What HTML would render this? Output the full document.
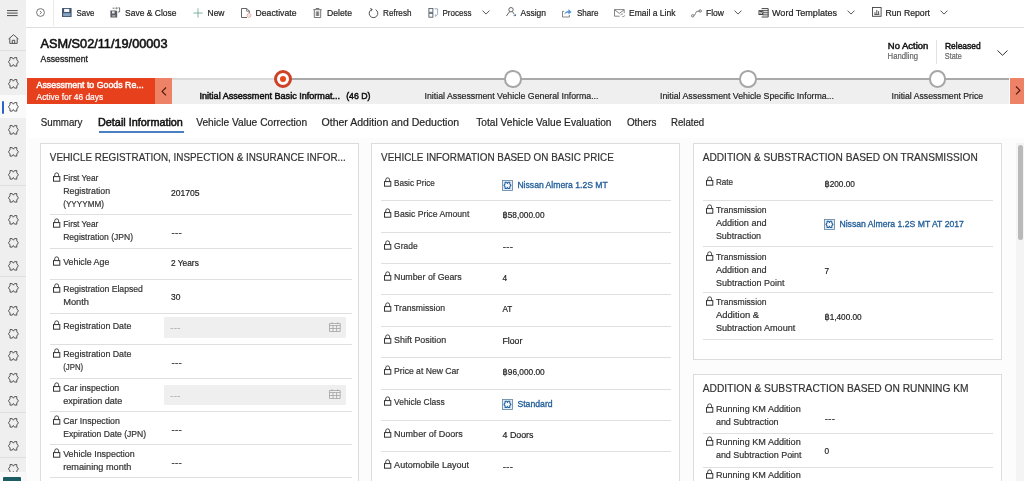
<!DOCTYPE html>
<html lang="en">
<head>
<meta charset="utf-8">
<title>Assessment</title>
<style>
*{box-sizing:border-box;margin:0;padding:0}
html,body{width:1024px;height:481px;overflow:hidden;background:#fff}
body{font-family:"Liberation Sans","DejaVu Sans",sans-serif;color:#222;position:relative;font-size:9px}
.a,.t{position:absolute}
.t{white-space:nowrap;transform-origin:0 0;color:#262626}
#side{left:0;top:0;width:26.4px;height:481px;background:#efefef}
#sel{left:0;top:95px;width:26.4px;height:23px;background:#fafafa}
#selbar{left:1.5px;top:100.5px;width:2.2px;height:13px;background:#2b63c7;border-radius:1px}
.sd{position:absolute;left:0;width:26.4px;height:1px;background:#dedede}
.pz{position:absolute;left:7.5px;width:11px;height:10px}
#topbar{left:26.4px;top:0;width:998px;height:27.6px;background:#fff;border-bottom:1.7px solid #dedede}
#bpf{left:27px;top:79px;width:981.7px;height:24.7px;background:#efefef}
#bpfline1{left:172px;top:78px;width:112px;height:1.7px;background:#dadada}
#bpfline2{left:284px;top:78px;width:724.7px;height:1.7px;background:#a9a9a9}
#bpfred{left:27px;top:78px;width:128.2px;height:25.7px;background:#e6401d}
#bpfred2{left:155.2px;top:78px;width:17px;height:25.7px;background:#ee8267}
#bpfnext{left:1010px;top:78px;width:14px;height:25.7px;background:#ee8267}
.circ{position:absolute;top:70.4px;width:17.6px;height:17.6px;border-radius:50%;border:2.7px solid #a6a6a6;background:#fff}
#content{left:27px;top:138px;width:997px;height:343px;background:#fcfcfc}
.card{position:absolute;background:#fff;border:1px solid #dcdcdc}
.sep{position:absolute;height:1px;background:#dfdfdf}
.dt{position:absolute;background:#efefef;height:21px;border-radius:1px}
</style>
</head>
<body>
<div id="bg" style="position:absolute;left:0;top:0;width:1024px;height:481px">

<div id="side" class="a"></div>
<div id="sel" class="a"></div><div id="selbar" class="a"></div>
<div class="sd" style="top:50px"></div>
<div class="sd" style="top:185px"></div>
<div class="sd" style="top:276px"></div>
<div class="sd" style="top:411.5px"></div>
<div class="sd" style="top:457px"></div>
<svg class="a" style="left:7.4px;top:10.3px" width="11" height="7" viewBox="0 0 11 7"><path d="M0 0.6H10.7M0 3.1H10.7M0 5.6H10.7" stroke="#4a4a4a" stroke-width="1" fill="none"/></svg>
<svg class="a" style="left:7.5px;top:33.5px" width="11" height="10" viewBox="0 0 11 10"><path d="M0.6 5 L5.5 0.7 L10.4 5 M1.8 4.2 V9.4 H9.2 V4.2 M4.3 9.4 V6.3 H6.7 V9.4" stroke="#444" stroke-width="0.9" fill="none" stroke-linejoin="round"/></svg>
<svg class="pz" style="top:56.5px" viewBox="0 0 11 10"><path d="M2 0.6 H4.3 L5.4 2.2 L6.5 0.6 H8.8 V2.8 L10.4 4.85 L8.8 6.9 V9.1 H6.5 L5.4 7.5 L4.3 9.1 H2 V6.9 L0.4 4.85 L2 2.8 Z" stroke="#444" stroke-width="0.9" fill="none" stroke-linejoin="round"/></svg>
<svg class="pz" style="top:79.0px" viewBox="0 0 11 10"><path d="M2 0.6 H4.3 L5.4 2.2 L6.5 0.6 H8.8 V2.8 L10.4 4.85 L8.8 6.9 V9.1 H6.5 L5.4 7.5 L4.3 9.1 H2 V6.9 L0.4 4.85 L2 2.8 Z" stroke="#444" stroke-width="0.9" fill="none" stroke-linejoin="round"/></svg>
<svg class="pz" style="top:102.0px" viewBox="0 0 11 10"><path d="M2 0.6 H4.3 L5.4 2.2 L6.5 0.6 H8.8 V2.8 L10.4 4.85 L8.8 6.9 V9.1 H6.5 L5.4 7.5 L4.3 9.1 H2 V6.9 L0.4 4.85 L2 2.8 Z" stroke="#444" stroke-width="0.9" fill="none" stroke-linejoin="round"/></svg>
<svg class="pz" style="top:124.5px" viewBox="0 0 11 10"><path d="M2 0.6 H4.3 L5.4 2.2 L6.5 0.6 H8.8 V2.8 L10.4 4.85 L8.8 6.9 V9.1 H6.5 L5.4 7.5 L4.3 9.1 H2 V6.9 L0.4 4.85 L2 2.8 Z" stroke="#444" stroke-width="0.9" fill="none" stroke-linejoin="round"/></svg>
<svg class="pz" style="top:147.0px" viewBox="0 0 11 10"><path d="M2 0.6 H4.3 L5.4 2.2 L6.5 0.6 H8.8 V2.8 L10.4 4.85 L8.8 6.9 V9.1 H6.5 L5.4 7.5 L4.3 9.1 H2 V6.9 L0.4 4.85 L2 2.8 Z" stroke="#444" stroke-width="0.9" fill="none" stroke-linejoin="round"/></svg>
<svg class="pz" style="top:169.5px" viewBox="0 0 11 10"><path d="M2 0.6 H4.3 L5.4 2.2 L6.5 0.6 H8.8 V2.8 L10.4 4.85 L8.8 6.9 V9.1 H6.5 L5.4 7.5 L4.3 9.1 H2 V6.9 L0.4 4.85 L2 2.8 Z" stroke="#444" stroke-width="0.9" fill="none" stroke-linejoin="round"/></svg>
<svg class="pz" style="top:192.5px" viewBox="0 0 11 10"><path d="M2 0.6 H4.3 L5.4 2.2 L6.5 0.6 H8.8 V2.8 L10.4 4.85 L8.8 6.9 V9.1 H6.5 L5.4 7.5 L4.3 9.1 H2 V6.9 L0.4 4.85 L2 2.8 Z" stroke="#444" stroke-width="0.9" fill="none" stroke-linejoin="round"/></svg>
<svg class="pz" style="top:215.0px" viewBox="0 0 11 10"><path d="M2 0.6 H4.3 L5.4 2.2 L6.5 0.6 H8.8 V2.8 L10.4 4.85 L8.8 6.9 V9.1 H6.5 L5.4 7.5 L4.3 9.1 H2 V6.9 L0.4 4.85 L2 2.8 Z" stroke="#444" stroke-width="0.9" fill="none" stroke-linejoin="round"/></svg>
<svg class="pz" style="top:238.0px" viewBox="0 0 11 10"><path d="M2 0.6 H4.3 L5.4 2.2 L6.5 0.6 H8.8 V2.8 L10.4 4.85 L8.8 6.9 V9.1 H6.5 L5.4 7.5 L4.3 9.1 H2 V6.9 L0.4 4.85 L2 2.8 Z" stroke="#444" stroke-width="0.9" fill="none" stroke-linejoin="round"/></svg>
<svg class="pz" style="top:260.5px" viewBox="0 0 11 10"><path d="M2 0.6 H4.3 L5.4 2.2 L6.5 0.6 H8.8 V2.8 L10.4 4.85 L8.8 6.9 V9.1 H6.5 L5.4 7.5 L4.3 9.1 H2 V6.9 L0.4 4.85 L2 2.8 Z" stroke="#444" stroke-width="0.9" fill="none" stroke-linejoin="round"/></svg>
<svg class="pz" style="top:283.0px" viewBox="0 0 11 10"><path d="M2 0.6 H4.3 L5.4 2.2 L6.5 0.6 H8.8 V2.8 L10.4 4.85 L8.8 6.9 V9.1 H6.5 L5.4 7.5 L4.3 9.1 H2 V6.9 L0.4 4.85 L2 2.8 Z" stroke="#444" stroke-width="0.9" fill="none" stroke-linejoin="round"/></svg>
<svg class="pz" style="top:305.5px" viewBox="0 0 11 10"><path d="M2 0.6 H4.3 L5.4 2.2 L6.5 0.6 H8.8 V2.8 L10.4 4.85 L8.8 6.9 V9.1 H6.5 L5.4 7.5 L4.3 9.1 H2 V6.9 L0.4 4.85 L2 2.8 Z" stroke="#444" stroke-width="0.9" fill="none" stroke-linejoin="round"/></svg>
<svg class="pz" style="top:328.5px" viewBox="0 0 11 10"><path d="M2 0.6 H4.3 L5.4 2.2 L6.5 0.6 H8.8 V2.8 L10.4 4.85 L8.8 6.9 V9.1 H6.5 L5.4 7.5 L4.3 9.1 H2 V6.9 L0.4 4.85 L2 2.8 Z" stroke="#444" stroke-width="0.9" fill="none" stroke-linejoin="round"/></svg>
<svg class="pz" style="top:351.0px" viewBox="0 0 11 10"><path d="M2 0.6 H4.3 L5.4 2.2 L6.5 0.6 H8.8 V2.8 L10.4 4.85 L8.8 6.9 V9.1 H6.5 L5.4 7.5 L4.3 9.1 H2 V6.9 L0.4 4.85 L2 2.8 Z" stroke="#444" stroke-width="0.9" fill="none" stroke-linejoin="round"/></svg>
<svg class="pz" style="top:373.0px" viewBox="0 0 11 10"><path d="M2 0.6 H4.3 L5.4 2.2 L6.5 0.6 H8.8 V2.8 L10.4 4.85 L8.8 6.9 V9.1 H6.5 L5.4 7.5 L4.3 9.1 H2 V6.9 L0.4 4.85 L2 2.8 Z" stroke="#444" stroke-width="0.9" fill="none" stroke-linejoin="round"/></svg>
<svg class="pz" style="top:395.6px" viewBox="0 0 11 10"><path d="M2 0.6 H4.3 L5.4 2.2 L6.5 0.6 H8.8 V2.8 L10.4 4.85 L8.8 6.9 V9.1 H6.5 L5.4 7.5 L4.3 9.1 H2 V6.9 L0.4 4.85 L2 2.8 Z" stroke="#444" stroke-width="0.9" fill="none" stroke-linejoin="round"/></svg>
<svg class="pz" style="top:418.2px" viewBox="0 0 11 10"><path d="M2 0.6 H4.3 L5.4 2.2 L6.5 0.6 H8.8 V2.8 L10.4 4.85 L8.8 6.9 V9.1 H6.5 L5.4 7.5 L4.3 9.1 H2 V6.9 L0.4 4.85 L2 2.8 Z" stroke="#444" stroke-width="0.9" fill="none" stroke-linejoin="round"/></svg>
<svg class="pz" style="top:441.0px" viewBox="0 0 11 10"><path d="M2 0.6 H4.3 L5.4 2.2 L6.5 0.6 H8.8 V2.8 L10.4 4.85 L8.8 6.9 V9.1 H6.5 L5.4 7.5 L4.3 9.1 H2 V6.9 L0.4 4.85 L2 2.8 Z" stroke="#444" stroke-width="0.9" fill="none" stroke-linejoin="round"/></svg>
<svg class="pz" style="top:464.2px" viewBox="0 0 11 10"><path d="M2 0.6 H4.3 L5.4 2.2 L6.5 0.6 H8.8 V2.8 L10.4 4.85 L8.8 6.9 V9.1 H6.5 L5.4 7.5 L4.3 9.1 H2 V6.9 L0.4 4.85 L2 2.8 Z" stroke="#444" stroke-width="0.9" fill="none" stroke-linejoin="round"/></svg>
<div class="a" style="left:0;top:472.2px;width:27px;height:9px;background:#f8f8f8"></div>
<div class="a" style="left:3.3px;top:477.2px;width:17.6px;height:4px;background:#1b5c63;border-radius:1px 1px 0 0"></div>
<div id="topbar" class="a"></div>
<div class="a" style="left:52.6px;top:0;width:1px;height:26px;background:#eaeaea"></div>
<svg class="a" style="left:36px;top:8px" width="9" height="9" viewBox="0 0 9 9"><circle cx="4.5" cy="4.5" r="3.9" stroke="#555" stroke-width="0.8" fill="none"/><path d="M3.9 2.9 L5.5 4.5 L3.9 6.1" stroke="#555" stroke-width="0.8" fill="none"/></svg>
<svg class="a" style="left:62.3px;top:7.9px" width="10" height="9.2" viewBox="0 0 10 9.2"><rect x="0" y="0" width="9.6" height="9" rx="0.6" fill="#43556d"/><rect x="2.1" y="0.9" width="5.2" height="3.1" fill="#f4f6f9"/><rect x="1.2" y="5" width="7.2" height="3.2" fill="#6d8db3"/><path d="M1.2 6.1 H8.4 M1.2 7.3 H8.4" stroke="#b9c9dc" stroke-width="0.5"/></svg>
<svg class="a" style="left:110px;top:7.3px" width="11" height="11" viewBox="0 0 11 11"><path d="M0.4 3.6 H6.2 L7.2 4.6 V10.4 H0.4 Z" fill="#585d63"/><rect x="2" y="4.3" width="2.6" height="2.2" fill="#e9e9e9"/><rect x="2.2" y="8.3" width="3.2" height="1.2" fill="#c8c8c8"/><path d="M2.6 1.2 H4.6 M5.4 1.2 H7 M8.4 0.8 H9.6 V5 H8" stroke="#666" stroke-width="0.9" fill="none"/><path d="M6.4 0.3 L7.6 1.2 L6.4 2.1" stroke="#666" stroke-width="0.7" fill="none"/></svg>
<svg class="a" style="left:192.5px;top:8px" width="10" height="10" viewBox="0 0 10 10"><path d="M5 0.3 V9.7 M0.3 5 H9.7" stroke="#4f9a7d" stroke-width="0.7" fill="none"/></svg>
<svg class="a" style="left:241px;top:8px" width="11" height="10" viewBox="0 0 11 10"><path d="M6 9.5 H0.5 V0.5 H5.8 L8.3 3 V5" stroke="#555" stroke-width="0.9" fill="none"/><path d="M5.6 0.7 V3.2 H8.1" stroke="#555" stroke-width="0.7" fill="none"/><circle cx="8" cy="7.4" r="1.9" stroke="#d98a80" stroke-width="0.7" fill="#fff"/><path d="M7.1 6.5 L8.9 8.3" stroke="#d98a80" stroke-width="0.6"/></svg>
<svg class="a" style="left:313px;top:8px" width="9" height="10" viewBox="0 0 9 10"><path d="M0.3 1.7 H8.7 M3 1.5 V0.5 H6 V1.5 M1.3 1.8 V9.5 H7.7 V1.8 M3.3 3.4 V8 M4.5 3.4 V8 M5.7 3.4 V8" stroke="#555" stroke-width="0.8" fill="none"/></svg>
<svg class="a" style="left:368px;top:7.5px" width="11" height="11" viewBox="0 0 11 11"><path d="M4 1.3 A4.3 4.3 0 1 0 7.6 1.6" stroke="#444" stroke-width="0.9" fill="none"/><path d="M2.2 0.4 L4.2 1.3 L3.2 3.2" stroke="#444" stroke-width="0.8" fill="none"/></svg>
<svg class="a" style="left:428px;top:8px" width="11" height="10" viewBox="0 0 11 10"><rect x="0.9" y="0.4" width="4" height="3.9" stroke="#505a66" stroke-width="0.9" fill="none"/><rect x="0.9" y="5.3" width="4" height="3.9" stroke="#505a66" stroke-width="0.9" fill="none"/><path d="M6.6 0.8 H9.6 V5.6 C9.6 7 8.8 7.6 7.4 7.6 M8.2 6.4 L6.9 7.6 L8.2 8.8" stroke="#7f97b0" stroke-width="0.8" fill="none"/></svg>
<svg class="a" style="left:482px;top:9.9px" width="8" height="5" viewBox="0 0 8 5"><path d="M0.5 0.6 L4 4.1 L7.5 0.6" stroke="#555" stroke-width="1" fill="none"/></svg>
<svg class="a" style="left:505.7px;top:7.3px" width="11" height="10" viewBox="0 0 11 10"><circle cx="5" cy="2.7" r="2.2" stroke="#4a4a4a" stroke-width="0.85" fill="none"/><path d="M0.4 9 L3.6 4.6 M6.4 4.6 L8 6.9" stroke="#4a4a4a" stroke-width="0.85" fill="none"/><path d="M7.6 8.2 H9.6 M8.8 7.3 L9.9 8.2 L8.8 9.1" stroke="#2d4a75" stroke-width="0.8" fill="none"/></svg>
<svg class="a" style="left:562px;top:7.5px" width="11" height="10" viewBox="0 0 11 10"><path d="M2.2 3.4 H0.5 V9 H7.4 V7" stroke="#666" stroke-width="0.8" fill="none"/><path d="M2.3 6.8 C2.7 4.2 4.4 3 6.4 3 V1 L9.6 3.9 L6.4 6.6 V4.8 C4.7 4.8 3.4 5.3 2.3 6.8 Z" fill="#5796d6"/></svg>
<svg class="a" style="left:613.9px;top:8.7px" width="11" height="9" viewBox="0 0 11 9"><path d="M5.6 7.2 H0.5 V0.6 H10.2 V4.2 M0.6 0.8 L5.3 4.4 L10.1 0.8" stroke="#666" stroke-width="0.8" fill="none"/><path d="M6.8 6.2 C6.8 5.3 7.4 5 8 5 H9 M8.2 7.6 H9.3 C10 7.6 10.5 7.2 10.5 6.3" stroke="#666" stroke-width="0.7" fill="none"/></svg>
<svg class="a" style="left:691px;top:8.5px" width="11" height="9" viewBox="0 0 11 9"><circle cx="1.7" cy="6.8" r="1.2" stroke="#555" stroke-width="0.8" fill="none"/><circle cx="9.2" cy="2" r="1.2" stroke="#555" stroke-width="0.8" fill="none"/><path d="M2.8 6.6 C4.6 6.4 4.2 2.8 6 2.4 C6.6 2.2 7.2 2.2 8 2.1" stroke="#555" stroke-width="0.8" fill="none"/></svg>
<svg class="a" style="left:733.5px;top:9.9px" width="8" height="5" viewBox="0 0 8 5"><path d="M0.5 0.6 L4 4.1 L7.5 0.6" stroke="#555" stroke-width="1" fill="none"/></svg>
<svg class="a" style="left:757.5px;top:7.6px" width="11" height="10" viewBox="0 0 11 10"><path d="M3.6 0.6 H10.2 V9 H3.6 M4.5 2.7 H10.2 M4.5 4.8 H10.2 M4.5 6.9 H10.2" stroke="#333" stroke-width="0.9" fill="none"/><rect x="0.5" y="2.2" width="4.8" height="4.8" fill="#3a3a3a"/><path d="M1.2 3.4 L2 6 L2.8 3.9 L3.6 6 L4.4 3.4" stroke="#fff" stroke-width="0.6" fill="none"/></svg>
<svg class="a" style="left:846.5px;top:9.9px" width="8" height="5" viewBox="0 0 8 5"><path d="M0.5 0.6 L4 4.1 L7.5 0.6" stroke="#555" stroke-width="1" fill="none"/></svg>
<svg class="a" style="left:871.5px;top:7.2px" width="10" height="11" viewBox="0 0 10 11"><rect x="0.5" y="0.5" width="8.6" height="8.8" stroke="#444" stroke-width="0.9" fill="none"/><path d="M3 7.4 V5.2 M4.8 7.4 V3 M6.6 7.4 V4.2 M2.3 7.6 H7.4" stroke="#444" stroke-width="0.9" fill="none"/></svg>
<svg class="a" style="left:940px;top:9.9px" width="8" height="5" viewBox="0 0 8 5"><path d="M0.5 0.6 L4 4.1 L7.5 0.6" stroke="#555" stroke-width="1" fill="none"/></svg>
<div class="a" style="left:936px;top:40px;width:1px;height:24px;background:#e2e2e2"></div>
<svg class="a" style="left:997px;top:49.5px" width="11" height="6" viewBox="0 0 11 6"><path d="M0.5 0.5 L5.5 5.3 L10.5 0.5" stroke="#333" stroke-width="1" fill="none"/></svg>
<div id="bpf" class="a"></div>
<div id="bpfline1" class="a"></div><div id="bpfline2" class="a"></div>
<div id="bpfred" class="a"></div><div id="bpfred2" class="a"></div><div id="bpfnext" class="a"></div>
<svg class="a" style="left:160.6px;top:86.8px" width="6" height="9" viewBox="0 0 6 9"><path d="M5 0.5 L1.1 4.4 L5 8.3" stroke="#4a170c" stroke-width="1.1" fill="none"/></svg>
<svg class="a" style="left:1015px;top:86.2px" width="6" height="9" viewBox="0 0 6 9"><path d="M1 0.5 L4.9 4.4 L1 8.3" stroke="#4a170c" stroke-width="1.1" fill="none"/></svg>
<div class="a" style="left:274.4px;top:70.3px;width:18px;height:18px;border-radius:50%;border:3.4px solid #cd4127;background:#fff"></div>
<div class="a" style="left:280.4px;top:76.3px;width:6px;height:6px;border-radius:50%;background:#e8461c"></div>
<div class="circ" style="left:504.2px"></div>
<div class="circ" style="left:739.2px"></div>
<div class="circ" style="left:928.7px"></div>
<div class="a" style="left:98.5px;top:130.6px;width:85.2px;height:2.3px;background:#4a80c2"></div>
<div id="content" class="a"></div>
<div class="a" style="left:1015.8px;top:143.4px;width:8.2px;height:338px;background:#f4f4f4"></div>
<div class="a" style="left:1018px;top:145px;width:5.2px;height:95px;background:#b9b9b9;border-radius:2.5px"></div>
<div class="card" style="left:39.7px;top:142.8px;width:319px;height:345px"></div>
<div class="sep" style="left:50px;top:214.4px;width:301.5px"></div>
<div class="sep" style="left:50px;top:247.8px;width:301.5px"></div>
<div class="sep" style="left:50px;top:279.1px;width:301.5px"></div>
<div class="sep" style="left:50px;top:312.8px;width:301.5px"></div>
<div class="sep" style="left:50px;top:344.4px;width:301.5px"></div>
<div class="sep" style="left:50px;top:377.7px;width:301.5px"></div>
<div class="sep" style="left:50px;top:410.6px;width:301.5px"></div>
<div class="sep" style="left:50px;top:444.0px;width:301.5px"></div>
<div class="sep" style="left:50px;top:477.3px;width:301.5px"></div>
<svg class="a" style="left:53px;top:172.1px" width="8" height="10" viewBox="0 0 8 10"><rect x="0.5" y="4.6" width="6.3" height="4.6" stroke="#333" stroke-width="1" fill="none"/><path d="M1.7 4.6 V2.8 A1.95 1.95 0 0 1 5.6 2.8 V4.6" stroke="#333" stroke-width="0.9" fill="none"/></svg>
<svg class="a" style="left:53px;top:218.4px" width="8" height="10" viewBox="0 0 8 10"><rect x="0.5" y="4.6" width="6.3" height="4.6" stroke="#333" stroke-width="1" fill="none"/><path d="M1.7 4.6 V2.8 A1.95 1.95 0 0 1 5.6 2.8 V4.6" stroke="#333" stroke-width="0.9" fill="none"/></svg>
<svg class="a" style="left:53px;top:255.6px" width="8" height="10" viewBox="0 0 8 10"><rect x="0.5" y="4.6" width="6.3" height="4.6" stroke="#333" stroke-width="1" fill="none"/><path d="M1.7 4.6 V2.8 A1.95 1.95 0 0 1 5.6 2.8 V4.6" stroke="#333" stroke-width="0.9" fill="none"/></svg>
<svg class="a" style="left:53px;top:282.9px" width="8" height="10" viewBox="0 0 8 10"><rect x="0.5" y="4.6" width="6.3" height="4.6" stroke="#333" stroke-width="1" fill="none"/><path d="M1.7 4.6 V2.8 A1.95 1.95 0 0 1 5.6 2.8 V4.6" stroke="#333" stroke-width="0.9" fill="none"/></svg>
<svg class="a" style="left:53px;top:319.6px" width="8" height="10" viewBox="0 0 8 10"><rect x="0.5" y="4.6" width="6.3" height="4.6" stroke="#333" stroke-width="1" fill="none"/><path d="M1.7 4.6 V2.8 A1.95 1.95 0 0 1 5.6 2.8 V4.6" stroke="#333" stroke-width="0.9" fill="none"/></svg>
<div class="dt" style="left:163.8px;top:316.8px;width:181.8px;height:20.8px"></div>
<svg class="a" style="left:328.5px;top:321.6px" width="12" height="10" viewBox="0 0 12 10"><path d="M0.5 1.5 H11.2 V9.5 H0.5 Z M0.5 3.5 H11.2 M3 0.3 V2 M8.7 0.3 V2 M4 3.5 V9.5 M7.6 3.5 V9.5 M0.5 6.5 H11.2" stroke="#999" stroke-width="0.7" fill="none"/></svg>
<svg class="a" style="left:53px;top:348.4px" width="8" height="10" viewBox="0 0 8 10"><rect x="0.5" y="4.6" width="6.3" height="4.6" stroke="#333" stroke-width="1" fill="none"/><path d="M1.7 4.6 V2.8 A1.95 1.95 0 0 1 5.6 2.8 V4.6" stroke="#333" stroke-width="0.9" fill="none"/></svg>
<svg class="a" style="left:53px;top:381.9px" width="8" height="10" viewBox="0 0 8 10"><rect x="0.5" y="4.6" width="6.3" height="4.6" stroke="#333" stroke-width="1" fill="none"/><path d="M1.7 4.6 V2.8 A1.95 1.95 0 0 1 5.6 2.8 V4.6" stroke="#333" stroke-width="0.9" fill="none"/></svg>
<div class="dt" style="left:163.8px;top:384.5px;width:181.8px;height:20.8px"></div>
<svg class="a" style="left:328.5px;top:389.3px" width="12" height="10" viewBox="0 0 12 10"><path d="M0.5 1.5 H11.2 V9.5 H0.5 Z M0.5 3.5 H11.2 M3 0.3 V2 M8.7 0.3 V2 M4 3.5 V9.5 M7.6 3.5 V9.5 M0.5 6.5 H11.2" stroke="#999" stroke-width="0.7" fill="none"/></svg>
<svg class="a" style="left:53px;top:415.4px" width="8" height="10" viewBox="0 0 8 10"><rect x="0.5" y="4.6" width="6.3" height="4.6" stroke="#333" stroke-width="1" fill="none"/><path d="M1.7 4.6 V2.8 A1.95 1.95 0 0 1 5.6 2.8 V4.6" stroke="#333" stroke-width="0.9" fill="none"/></svg>
<svg class="a" style="left:53px;top:448.2px" width="8" height="10" viewBox="0 0 8 10"><rect x="0.5" y="4.6" width="6.3" height="4.6" stroke="#333" stroke-width="1" fill="none"/><path d="M1.7 4.6 V2.8 A1.95 1.95 0 0 1 5.6 2.8 V4.6" stroke="#333" stroke-width="0.9" fill="none"/></svg>
<div class="card" style="left:371.1px;top:142.8px;width:309.4px;height:345px"></div>
<div class="sep" style="left:381px;top:199.9px;width:290px"></div>
<div class="sep" style="left:381px;top:231.8px;width:290px"></div>
<div class="sep" style="left:381px;top:262.8px;width:290px"></div>
<div class="sep" style="left:381px;top:294.3px;width:290px"></div>
<div class="sep" style="left:381px;top:325.8px;width:290px"></div>
<div class="sep" style="left:381px;top:356.9px;width:290px"></div>
<div class="sep" style="left:381px;top:388.5px;width:290px"></div>
<div class="sep" style="left:381px;top:419.9px;width:290px"></div>
<div class="sep" style="left:381px;top:451.4px;width:290px"></div>
<svg class="a" style="left:384px;top:177.0px" width="8" height="10" viewBox="0 0 8 10"><rect x="0.5" y="4.6" width="6.3" height="4.6" stroke="#333" stroke-width="1" fill="none"/><path d="M1.7 4.6 V2.8 A1.95 1.95 0 0 1 5.6 2.8 V4.6" stroke="#333" stroke-width="0.9" fill="none"/></svg>
<svg class="a" style="left:502.0px;top:179.5px" width="11.5" height="11.5" viewBox="0 0 11.5 11.5"><rect x="0.45" y="0.45" width="10.1" height="10.1" stroke="#5d7f9f" stroke-width="0.8" fill="#e4eef8"/><g transform="translate(1.7,1.8) scale(0.69,0.74)"><path d="M2 0.6 H4.3 L5.4 2.2 L6.5 0.6 H8.8 V2.8 L10.4 4.85 L8.8 6.9 V9.1 H6.5 L5.4 7.5 L4.3 9.1 H2 V6.9 L0.4 4.85 L2 2.8 Z" stroke="#255f9c" stroke-width="1.5" fill="#f3f8fd" stroke-linejoin="round"/></g></svg>
<svg class="a" style="left:384px;top:207.8px" width="8" height="10" viewBox="0 0 8 10"><rect x="0.5" y="4.6" width="6.3" height="4.6" stroke="#333" stroke-width="1" fill="none"/><path d="M1.7 4.6 V2.8 A1.95 1.95 0 0 1 5.6 2.8 V4.6" stroke="#333" stroke-width="0.9" fill="none"/></svg>
<svg class="a" style="left:384px;top:239.7px" width="8" height="10" viewBox="0 0 8 10"><rect x="0.5" y="4.6" width="6.3" height="4.6" stroke="#333" stroke-width="1" fill="none"/><path d="M1.7 4.6 V2.8 A1.95 1.95 0 0 1 5.6 2.8 V4.6" stroke="#333" stroke-width="0.9" fill="none"/></svg>
<svg class="a" style="left:384px;top:270.7px" width="8" height="10" viewBox="0 0 8 10"><rect x="0.5" y="4.6" width="6.3" height="4.6" stroke="#333" stroke-width="1" fill="none"/><path d="M1.7 4.6 V2.8 A1.95 1.95 0 0 1 5.6 2.8 V4.6" stroke="#333" stroke-width="0.9" fill="none"/></svg>
<svg class="a" style="left:384px;top:302.2px" width="8" height="10" viewBox="0 0 8 10"><rect x="0.5" y="4.6" width="6.3" height="4.6" stroke="#333" stroke-width="1" fill="none"/><path d="M1.7 4.6 V2.8 A1.95 1.95 0 0 1 5.6 2.8 V4.6" stroke="#333" stroke-width="0.9" fill="none"/></svg>
<svg class="a" style="left:384px;top:333.7px" width="8" height="10" viewBox="0 0 8 10"><rect x="0.5" y="4.6" width="6.3" height="4.6" stroke="#333" stroke-width="1" fill="none"/><path d="M1.7 4.6 V2.8 A1.95 1.95 0 0 1 5.6 2.8 V4.6" stroke="#333" stroke-width="0.9" fill="none"/></svg>
<svg class="a" style="left:384px;top:364.8px" width="8" height="10" viewBox="0 0 8 10"><rect x="0.5" y="4.6" width="6.3" height="4.6" stroke="#333" stroke-width="1" fill="none"/><path d="M1.7 4.6 V2.8 A1.95 1.95 0 0 1 5.6 2.8 V4.6" stroke="#333" stroke-width="0.9" fill="none"/></svg>
<svg class="a" style="left:384px;top:396.4px" width="8" height="10" viewBox="0 0 8 10"><rect x="0.5" y="4.6" width="6.3" height="4.6" stroke="#333" stroke-width="1" fill="none"/><path d="M1.7 4.6 V2.8 A1.95 1.95 0 0 1 5.6 2.8 V4.6" stroke="#333" stroke-width="0.9" fill="none"/></svg>
<svg class="a" style="left:502.0px;top:398.9px" width="11.5" height="11.5" viewBox="0 0 11.5 11.5"><rect x="0.45" y="0.45" width="10.1" height="10.1" stroke="#5d7f9f" stroke-width="0.8" fill="#e4eef8"/><g transform="translate(1.7,1.8) scale(0.69,0.74)"><path d="M2 0.6 H4.3 L5.4 2.2 L6.5 0.6 H8.8 V2.8 L10.4 4.85 L8.8 6.9 V9.1 H6.5 L5.4 7.5 L4.3 9.1 H2 V6.9 L0.4 4.85 L2 2.8 Z" stroke="#255f9c" stroke-width="1.5" fill="#f3f8fd" stroke-linejoin="round"/></g></svg>
<svg class="a" style="left:384px;top:427.8px" width="8" height="10" viewBox="0 0 8 10"><rect x="0.5" y="4.6" width="6.3" height="4.6" stroke="#333" stroke-width="1" fill="none"/><path d="M1.7 4.6 V2.8 A1.95 1.95 0 0 1 5.6 2.8 V4.6" stroke="#333" stroke-width="0.9" fill="none"/></svg>
<svg class="a" style="left:384px;top:459.3px" width="8" height="10" viewBox="0 0 8 10"><rect x="0.5" y="4.6" width="6.3" height="4.6" stroke="#333" stroke-width="1" fill="none"/><path d="M1.7 4.6 V2.8 A1.95 1.95 0 0 1 5.6 2.8 V4.6" stroke="#333" stroke-width="0.9" fill="none"/></svg>
<div class="card" style="left:693.1px;top:142.8px;width:309px;height:217.6px"></div>
<div class="sep" style="left:703px;top:199.8px;width:289.5px"></div>
<div class="sep" style="left:703px;top:245.7px;width:289.5px"></div>
<div class="sep" style="left:703px;top:292.1px;width:289.5px"></div>
<div class="sep" style="left:703px;top:338.9px;width:289.5px"></div>
<svg class="a" style="left:706px;top:175.6px" width="8" height="10" viewBox="0 0 8 10"><rect x="0.5" y="4.6" width="6.3" height="4.6" stroke="#333" stroke-width="1" fill="none"/><path d="M1.7 4.6 V2.8 A1.95 1.95 0 0 1 5.6 2.8 V4.6" stroke="#333" stroke-width="0.9" fill="none"/></svg>
<svg class="a" style="left:706px;top:204.3px" width="8" height="10" viewBox="0 0 8 10"><rect x="0.5" y="4.6" width="6.3" height="4.6" stroke="#333" stroke-width="1" fill="none"/><path d="M1.7 4.6 V2.8 A1.95 1.95 0 0 1 5.6 2.8 V4.6" stroke="#333" stroke-width="0.9" fill="none"/></svg>
<svg class="a" style="left:824.0px;top:218.9px" width="11.5" height="11.5" viewBox="0 0 11.5 11.5"><rect x="0.45" y="0.45" width="10.1" height="10.1" stroke="#5d7f9f" stroke-width="0.8" fill="#e4eef8"/><g transform="translate(1.7,1.8) scale(0.69,0.74)"><path d="M2 0.6 H4.3 L5.4 2.2 L6.5 0.6 H8.8 V2.8 L10.4 4.85 L8.8 6.9 V9.1 H6.5 L5.4 7.5 L4.3 9.1 H2 V6.9 L0.4 4.85 L2 2.8 Z" stroke="#255f9c" stroke-width="1.5" fill="#f3f8fd" stroke-linejoin="round"/></g></svg>
<svg class="a" style="left:706px;top:250.6px" width="8" height="10" viewBox="0 0 8 10"><rect x="0.5" y="4.6" width="6.3" height="4.6" stroke="#333" stroke-width="1" fill="none"/><path d="M1.7 4.6 V2.8 A1.95 1.95 0 0 1 5.6 2.8 V4.6" stroke="#333" stroke-width="0.9" fill="none"/></svg>
<svg class="a" style="left:706px;top:296.3px" width="8" height="10" viewBox="0 0 8 10"><rect x="0.5" y="4.6" width="6.3" height="4.6" stroke="#333" stroke-width="1" fill="none"/><path d="M1.7 4.6 V2.8 A1.95 1.95 0 0 1 5.6 2.8 V4.6" stroke="#333" stroke-width="0.9" fill="none"/></svg>
<div class="card" style="left:693.1px;top:373.7px;width:309px;height:120px"></div>
<div class="sep" style="left:703px;top:432.7px;width:289.5px"></div>
<div class="sep" style="left:703px;top:466.6px;width:289.5px"></div>
<svg class="a" style="left:706px;top:403.4px" width="8" height="10" viewBox="0 0 8 10"><rect x="0.5" y="4.6" width="6.3" height="4.6" stroke="#333" stroke-width="1" fill="none"/><path d="M1.7 4.6 V2.8 A1.95 1.95 0 0 1 5.6 2.8 V4.6" stroke="#333" stroke-width="0.9" fill="none"/></svg>
<svg class="a" style="left:706px;top:436.3px" width="8" height="10" viewBox="0 0 8 10"><rect x="0.5" y="4.6" width="6.3" height="4.6" stroke="#333" stroke-width="1" fill="none"/><path d="M1.7 4.6 V2.8 A1.95 1.95 0 0 1 5.6 2.8 V4.6" stroke="#333" stroke-width="0.9" fill="none"/></svg>
<svg class="a" style="left:706px;top:469.3px" width="8" height="10" viewBox="0 0 8 10"><rect x="0.5" y="4.6" width="6.3" height="4.6" stroke="#333" stroke-width="1" fill="none"/><path d="M1.7 4.6 V2.8 A1.95 1.95 0 0 1 5.6 2.8 V4.6" stroke="#333" stroke-width="0.9" fill="none"/></svg>
</div>
<div id="fg" style="position:absolute;left:0;top:0;width:1024px;height:481px;will-change:opacity">
<div class="t" style="left:76px;top:7px;font-size:9.3px;line-height:12px;transform:translate(0.50px,0.23px) scaleX(0.8489);color:#222;-webkit-text-stroke:0.2px #222;">Save</div>
<div class="t" style="left:125px;top:7px;font-size:9.3px;line-height:12px;transform:translate(0.00px,0.23px) scaleX(0.9143);color:#222;-webkit-text-stroke:0.2px #222;">Save &amp; Close</div>
<div class="t" style="left:207px;top:7px;font-size:9.3px;line-height:12px;transform:translate(0.50px,0.23px) scaleX(0.9135);color:#222;-webkit-text-stroke:0.2px #222;">New</div>
<div class="t" style="left:255px;top:7px;font-size:9.3px;line-height:12px;transform:translate(0.50px,0.23px) scaleX(0.9331);color:#222;-webkit-text-stroke:0.2px #222;">Deactivate</div>
<div class="t" style="left:327px;top:7px;font-size:9.3px;line-height:12px;transform:translate(0.00px,0.23px) scaleX(0.9302);color:#222;-webkit-text-stroke:0.2px #222;">Delete</div>
<div class="t" style="left:383px;top:7px;font-size:9.3px;line-height:12px;transform:translate(0.00px,0.23px) scaleX(0.8752);color:#222;-webkit-text-stroke:0.2px #222;">Refresh</div>
<div class="t" style="left:442px;top:7px;font-size:9.3px;line-height:12px;transform:translate(0.50px,0.23px) scaleX(0.8633);color:#222;-webkit-text-stroke:0.2px #222;">Process</div>
<div class="t" style="left:520px;top:7px;font-size:9.3px;line-height:12px;transform:translate(0.50px,0.23px) scaleX(0.9138);color:#222;-webkit-text-stroke:0.2px #222;">Assign</div>
<div class="t" style="left:577px;top:7px;font-size:9.3px;line-height:12px;transform:translate(0.00px,0.23px) scaleX(0.8665);color:#222;-webkit-text-stroke:0.2px #222;">Share</div>
<div class="t" style="left:629px;top:7px;font-size:9.3px;line-height:12px;transform:translate(0.00px,0.23px) scaleX(0.9182);color:#222;-webkit-text-stroke:0.2px #222;">Email a Link</div>
<div class="t" style="left:706px;top:7px;font-size:9.3px;line-height:12px;transform:translate(0.00px,0.23px) scaleX(0.9165);color:#222;-webkit-text-stroke:0.2px #222;">Flow</div>
<div class="t" style="left:772px;top:7px;font-size:9.3px;line-height:12px;transform:translate(0.00px,0.23px) scaleX(0.9724);color:#222;-webkit-text-stroke:0.2px #222;">Word Templates</div>
<div class="t" style="left:885px;top:7px;font-size:9.3px;line-height:12px;transform:translate(0.50px,0.23px) scaleX(0.9359);color:#222;-webkit-text-stroke:0.2px #222;">Run Report</div>
<div class="t" style="left:40px;top:36px;font-size:12px;line-height:16px;transform:translate(0.50px,0.24px) scaleX(1.0594);color:#111;-webkit-text-stroke:0.55px #111;">ASM/S02/11/19/00003</div>
<div class="t" style="left:40px;top:53px;font-size:8.3px;line-height:12px;transform:translate(0.60px,0.02px) scaleX(1.0467);color:#222;-webkit-text-stroke:0.3px #222;">Assessment</div>
<div class="t" style="left:887px;top:40px;font-size:8.9px;line-height:12px;transform:translate(0.80px,0.22px) scaleX(1.0684);color:#111;-webkit-text-stroke:0.45px #111;">No Action</div>
<div class="t" style="left:887px;top:51px;font-size:8.2px;line-height:12px;transform:translate(0.60px,0.46px) scaleX(0.9404);color:#666;-webkit-text-stroke:0.2px #666;">Handling</div>
<div class="t" style="left:945px;top:40px;font-size:8.9px;line-height:12px;transform:translate(0.00px,0.22px) scaleX(0.9493);color:#111;-webkit-text-stroke:0.45px #111;">Released</div>
<div class="t" style="left:944px;top:51px;font-size:8.2px;line-height:12px;transform:translate(0.80px,0.46px) scaleX(0.8889);color:#666;-webkit-text-stroke:0.2px #666;">State</div>
<div class="t" style="left:36px;top:79px;font-size:8.8px;line-height:12px;transform:translate(0.60px,0.25px) scaleX(0.9993);color:#fff;-webkit-text-stroke:0.45px #fff;">Assessment to Goods Re...</div>
<div class="t" style="left:36px;top:90px;font-size:8.9px;line-height:12px;transform:translate(0.60px,0.52px) scaleX(0.9426);color:#fff;-webkit-text-stroke:0.2px #fff;">Active for 46 days</div>
<div class="t" style="left:199px;top:89px;font-size:8.9px;line-height:12px;transform:translate(0.50px,0.72px) scaleX(1.0209);color:#111;-webkit-text-stroke:0.5px #111;">Initial Assessment Basic Informat...</div>
<div class="t" style="left:346px;top:89px;font-size:8.9px;line-height:12px;transform:translate(0.20px,0.72px) scaleX(0.9849);color:#111;-webkit-text-stroke:0.5px #111;">(46 D)</div>
<div class="t" style="left:424px;top:89px;font-size:8.9px;line-height:12px;transform:translate(0.50px,0.52px) scaleX(0.9880);-webkit-text-stroke:0.2px #262626;">Initial Assessment Vehicle General Informa...</div>
<div class="t" style="left:660px;top:89px;font-size:8.9px;line-height:12px;transform:translate(0.00px,0.52px) scaleX(0.9908);-webkit-text-stroke:0.2px #262626;">Initial Assessment Vehicle Specific Informa...</div>
<div class="t" style="left:891px;top:89px;font-size:8.9px;line-height:12px;transform:translate(0.50px,0.52px) scaleX(0.9774);-webkit-text-stroke:0.2px #262626;">Initial Assessment Price</div>
<div class="t" style="left:40px;top:114px;font-size:10.5px;line-height:14px;transform:translate(0.70px,0.96px) scaleX(0.9302);color:#262626;-webkit-text-stroke:0.2px #262626;">Summary</div>
<div class="t" style="left:98px;top:114px;font-size:10.5px;line-height:14px;transform:translate(0.00px,0.96px) scaleX(1.0316);color:#111;-webkit-text-stroke:0.5px #111;">Detail Information</div>
<div class="t" style="left:196px;top:114px;font-size:10.5px;line-height:14px;transform:translate(0.20px,0.96px) scaleX(0.9720);color:#262626;-webkit-text-stroke:0.2px #262626;">Vehicle Value Correction</div>
<div class="t" style="left:321px;top:114px;font-size:10.5px;line-height:14px;transform:translate(0.50px,0.96px) scaleX(1.0037);color:#262626;-webkit-text-stroke:0.2px #262626;">Other Addition and Deduction</div>
<div class="t" style="left:476px;top:114px;font-size:10.5px;line-height:14px;transform:translate(0.30px,0.96px) scaleX(0.9664);color:#262626;-webkit-text-stroke:0.2px #262626;">Total Vehicle Value Evaluation</div>
<div class="t" style="left:626px;top:114px;font-size:10.5px;line-height:14px;transform:translate(0.90px,0.96px) scaleX(0.9392);color:#262626;-webkit-text-stroke:0.2px #262626;">Others</div>
<div class="t" style="left:671px;top:114px;font-size:10.5px;line-height:14px;transform:translate(0.00px,0.96px) scaleX(0.9170);color:#262626;-webkit-text-stroke:0.2px #262626;">Related</div>
<div class="t" style="left:49px;top:149px;font-size:11.2px;line-height:14px;transform:translate(0.80px,0.82px) scaleX(0.8823);color:#333;-webkit-text-stroke:0.2px #333;">VEHICLE REGISTRATION, INSPECTION &amp; INSURANCE INFOR...</div>
<div class="t" style="left:63px;top:172px;font-size:8.9px;line-height:12px;transform:translate(0.20px,0.02px) scaleX(0.9387);color:#333;-webkit-text-stroke:0.2px #333;">First Year</div>
<div class="t" style="left:63px;top:185px;font-size:8.9px;line-height:12px;transform:translate(0.20px,0.02px) scaleX(0.9903);color:#333;-webkit-text-stroke:0.2px #333;">Registration</div>
<div class="t" style="left:63px;top:198px;font-size:8.9px;line-height:12px;transform:translate(0.20px,0.02px) scaleX(0.9172);color:#333;-webkit-text-stroke:0.2px #333;">(YYYYMM)</div>
<div class="t" style="left:171px;top:187px;font-size:9.1px;line-height:12px;transform:translate(0.00px,0.15px) scaleX(0.9420);color:#222;-webkit-text-stroke:0.2px #222;">201705</div>
<div class="t" style="left:63px;top:218px;font-size:8.9px;line-height:12px;transform:translate(0.20px,0.32px) scaleX(0.9387);color:#333;-webkit-text-stroke:0.2px #333;">First Year</div>
<div class="t" style="left:63px;top:231px;font-size:8.9px;line-height:12px;transform:translate(0.20px,0.32px) scaleX(0.9628);color:#333;-webkit-text-stroke:0.2px #333;">Registration (JPN)</div>
<div class="t" style="left:171px;top:227px;font-size:9.2px;line-height:12px;transform:translate(0.50px,0.11px) scaleX(1.0449);color:#333;letter-spacing:0.3px;-webkit-text-stroke:0.2px #333;">---</div>
<div class="t" style="left:63px;top:255px;font-size:8.9px;line-height:12px;transform:translate(0.20px,0.52px) scaleX(0.9937);color:#333;-webkit-text-stroke:0.2px #333;">Vehicle Age</div>
<div class="t" style="left:171px;top:257px;font-size:9.1px;line-height:12px;transform:translate(0.00px,0.15px) scaleX(0.9162);color:#222;-webkit-text-stroke:0.2px #222;">2 Years</div>
<div class="t" style="left:63px;top:282px;font-size:8.9px;line-height:12px;transform:translate(0.20px,0.82px) scaleX(0.9731);color:#333;-webkit-text-stroke:0.2px #333;">Registration Elapsed</div>
<div class="t" style="left:63px;top:295px;font-size:8.9px;line-height:12px;transform:translate(0.20px,0.82px) scaleX(1.0457);color:#333;-webkit-text-stroke:0.2px #333;">Month</div>
<div class="t" style="left:171px;top:291px;font-size:9.1px;line-height:12px;transform:translate(0.00px,0.05px) scaleX(0.9284);color:#222;-webkit-text-stroke:0.2px #222;">30</div>
<div class="t" style="left:63px;top:319px;font-size:8.9px;line-height:12px;transform:translate(0.20px,0.52px) scaleX(0.9945);color:#333;-webkit-text-stroke:0.2px #333;">Registration Date</div>
<div class="t" style="left:170px;top:322px;font-size:9.2px;line-height:12px;transform:translate(0.20px,0.11px) scaleX(1.0449);color:#b5b5b5;letter-spacing:0.3px;-webkit-text-stroke:0.2px #b5b5b5;">---</div>
<div class="t" style="left:63px;top:348px;font-size:8.9px;line-height:12px;transform:translate(0.20px,0.32px) scaleX(0.9945);color:#333;-webkit-text-stroke:0.2px #333;">Registration Date</div>
<div class="t" style="left:63px;top:361px;font-size:8.9px;line-height:12px;transform:translate(0.20px,0.32px) scaleX(0.8815);color:#333;-webkit-text-stroke:0.2px #333;">(JPN)</div>
<div class="t" style="left:171px;top:356px;font-size:9.2px;line-height:12px;transform:translate(0.50px,0.71px) scaleX(1.0449);color:#333;letter-spacing:0.3px;-webkit-text-stroke:0.2px #333;">---</div>
<div class="t" style="left:63px;top:381px;font-size:8.9px;line-height:12px;transform:translate(0.20px,0.82px) scaleX(0.9871);color:#333;-webkit-text-stroke:0.2px #333;">Car inspection</div>
<div class="t" style="left:63px;top:394px;font-size:8.9px;line-height:12px;transform:translate(0.20px,0.82px) scaleX(1.0166);color:#333;-webkit-text-stroke:0.2px #333;">expiration date</div>
<div class="t" style="left:170px;top:389px;font-size:9.2px;line-height:12px;transform:translate(0.20px,0.81px) scaleX(1.0449);color:#b5b5b5;letter-spacing:0.3px;-webkit-text-stroke:0.2px #b5b5b5;">---</div>
<div class="t" style="left:63px;top:415px;font-size:8.9px;line-height:12px;transform:translate(0.20px,0.32px) scaleX(0.9907);color:#333;-webkit-text-stroke:0.2px #333;">Car Inspection</div>
<div class="t" style="left:63px;top:428px;font-size:8.9px;line-height:12px;transform:translate(0.20px,0.32px) scaleX(0.9659);color:#333;-webkit-text-stroke:0.2px #333;">Expiration Date (JPN)</div>
<div class="t" style="left:171px;top:423px;font-size:9.2px;line-height:12px;transform:translate(0.50px,0.91px) scaleX(1.0449);color:#333;letter-spacing:0.3px;-webkit-text-stroke:0.2px #333;">---</div>
<div class="t" style="left:63px;top:448px;font-size:8.9px;line-height:12px;transform:translate(0.20px,0.12px) scaleX(0.9979);color:#333;-webkit-text-stroke:0.2px #333;">Vehicle Inspection</div>
<div class="t" style="left:63px;top:461px;font-size:8.9px;line-height:12px;transform:translate(0.20px,0.12px) scaleX(1.0316);color:#333;-webkit-text-stroke:0.2px #333;">remaining month</div>
<div class="t" style="left:171px;top:456px;font-size:9.2px;line-height:12px;transform:translate(0.50px,0.81px) scaleX(1.0449);color:#333;letter-spacing:0.3px;-webkit-text-stroke:0.2px #333;">---</div>
<div class="t" style="left:381px;top:149px;font-size:11.2px;line-height:14px;transform:translate(0.10px,0.82px) scaleX(0.8835);color:#333;-webkit-text-stroke:0.2px #333;">VEHICLE INFORMATION BASED ON BASIC PRICE</div>
<div class="t" style="left:394px;top:176px;font-size:8.9px;line-height:12px;transform:translate(0.10px,0.92px) scaleX(0.9169);color:#333;-webkit-text-stroke:0.2px #333;">Basic Price</div>
<div class="t" style="left:517px;top:178px;font-size:9.1px;line-height:12px;transform:translate(0.40px,0.75px) scaleX(0.9464);color:#25609b;-webkit-text-stroke:0.32px #25609b;">Nissan Almera 1.2S MT</div>
<div class="t" style="left:394px;top:207px;font-size:8.9px;line-height:12px;transform:translate(0.10px,0.72px) scaleX(0.9772);color:#333;-webkit-text-stroke:0.2px #333;">Basic Price Amount</div>
<div class="t" style="left:502px;top:209px;font-size:9.1px;line-height:12px;transform:translate(0.50px,0.05px) scaleX(0.9081);color:#222;-webkit-text-stroke:0.2px #222;">฿58,000.00</div>
<div class="t" style="left:394px;top:239px;font-size:8.9px;line-height:12px;transform:translate(0.10px,0.62px) scaleX(0.9525);color:#333;-webkit-text-stroke:0.2px #333;">Grade</div>
<div class="t" style="left:502px;top:241px;font-size:9.2px;line-height:12px;transform:translate(0.80px,0.01px) scaleX(1.0449);color:#333;letter-spacing:0.3px;-webkit-text-stroke:0.2px #333;">---</div>
<div class="t" style="left:394px;top:270px;font-size:8.9px;line-height:12px;transform:translate(0.10px,0.62px) scaleX(0.9930);color:#333;-webkit-text-stroke:0.2px #333;">Number of Gears</div>
<div class="t" style="left:502px;top:271px;font-size:9.1px;line-height:12px;transform:translate(0.50px,0.95px) scaleX(0.9086);color:#222;-webkit-text-stroke:0.2px #222;">4</div>
<div class="t" style="left:394px;top:302px;font-size:8.9px;line-height:12px;transform:translate(0.10px,0.12px) scaleX(0.9723);color:#333;-webkit-text-stroke:0.2px #333;">Transmission</div>
<div class="t" style="left:502px;top:303px;font-size:9.1px;line-height:12px;transform:translate(0.50px,0.45px) scaleX(0.8947);color:#222;-webkit-text-stroke:0.2px #222;">AT</div>
<div class="t" style="left:394px;top:333px;font-size:8.9px;line-height:12px;transform:translate(0.10px,0.62px) scaleX(1.0036);color:#333;-webkit-text-stroke:0.2px #333;">Shift Position</div>
<div class="t" style="left:502px;top:334px;font-size:9.1px;line-height:12px;transform:translate(0.50px,0.95px) scaleX(0.9557);color:#222;-webkit-text-stroke:0.2px #222;">Floor</div>
<div class="t" style="left:394px;top:364px;font-size:8.9px;line-height:12px;transform:translate(0.10px,0.72px) scaleX(0.9705);color:#333;-webkit-text-stroke:0.2px #333;">Price at New Car</div>
<div class="t" style="left:502px;top:366px;font-size:9.1px;line-height:12px;transform:translate(0.50px,0.05px) scaleX(0.9124);color:#222;-webkit-text-stroke:0.2px #222;">฿96,000.00</div>
<div class="t" style="left:394px;top:396px;font-size:8.9px;line-height:12px;transform:translate(0.10px,0.32px) scaleX(0.9478);color:#333;-webkit-text-stroke:0.2px #333;">Vehicle Class</div>
<div class="t" style="left:517px;top:398px;font-size:9.1px;line-height:12px;transform:translate(0.40px,0.15px) scaleX(0.9534);color:#25609b;-webkit-text-stroke:0.32px #25609b;">Standard</div>
<div class="t" style="left:394px;top:427px;font-size:8.9px;line-height:12px;transform:translate(0.10px,0.72px) scaleX(1.0151);color:#333;-webkit-text-stroke:0.2px #333;">Number of Doors</div>
<div class="t" style="left:502px;top:429px;font-size:9.1px;line-height:12px;transform:translate(0.50px,0.05px) scaleX(0.9735);color:#222;-webkit-text-stroke:0.2px #222;">4 Doors</div>
<div class="t" style="left:394px;top:459px;font-size:8.9px;line-height:12px;transform:translate(0.10px,0.22px) scaleX(1.0202);color:#333;-webkit-text-stroke:0.2px #333;">Automobile Layout</div>
<div class="t" style="left:502px;top:460px;font-size:9.2px;line-height:12px;transform:translate(0.80px,0.61px) scaleX(1.0449);color:#333;letter-spacing:0.3px;-webkit-text-stroke:0.2px #333;">---</div>
<div class="t" style="left:702px;top:149px;font-size:11.2px;line-height:14px;transform:translate(0.70px,0.92px) scaleX(0.9053);color:#333;-webkit-text-stroke:0.2px #333;">ADDITION &amp; SUBSTRACTION BASED ON TRANSMISSION</div>
<div class="t" style="left:715px;top:175px;font-size:8.9px;line-height:12px;transform:translate(0.90px,0.52px) scaleX(0.9120);color:#333;-webkit-text-stroke:0.2px #333;">Rate</div>
<div class="t" style="left:824px;top:177px;font-size:9.1px;line-height:12px;transform:translate(0.40px,0.75px) scaleX(0.9075);color:#222;-webkit-text-stroke:0.2px #222;">฿200.00</div>
<div class="t" style="left:715px;top:204px;font-size:8.9px;line-height:12px;transform:translate(0.90px,0.22px) scaleX(0.9666);color:#333;-webkit-text-stroke:0.2px #333;">Transmission</div>
<div class="t" style="left:715px;top:217px;font-size:8.9px;line-height:12px;transform:translate(0.90px,0.22px) scaleX(1.0272);color:#333;-webkit-text-stroke:0.2px #333;">Addition and</div>
<div class="t" style="left:715px;top:230px;font-size:8.9px;line-height:12px;transform:translate(0.90px,0.22px) scaleX(1.0065);color:#333;-webkit-text-stroke:0.2px #333;">Subtraction</div>
<div class="t" style="left:839px;top:218px;font-size:9.1px;line-height:12px;transform:translate(0.40px,0.15px) scaleX(0.9509);color:#25609b;-webkit-text-stroke:0.32px #25609b;">Nissan Almera 1.2S MT AT 2017</div>
<div class="t" style="left:715px;top:250px;font-size:8.9px;line-height:12px;transform:translate(0.90px,0.52px) scaleX(0.9666);color:#333;-webkit-text-stroke:0.2px #333;">Transmission</div>
<div class="t" style="left:715px;top:263px;font-size:8.9px;line-height:12px;transform:translate(0.90px,0.52px) scaleX(1.0272);color:#333;-webkit-text-stroke:0.2px #333;">Addition and</div>
<div class="t" style="left:715px;top:276px;font-size:8.9px;line-height:12px;transform:translate(0.90px,0.52px) scaleX(1.0134);color:#333;-webkit-text-stroke:0.2px #333;">Subtraction Point</div>
<div class="t" style="left:824px;top:265px;font-size:9.1px;line-height:12px;transform:translate(0.40px,0.35px) scaleX(0.9086);color:#222;-webkit-text-stroke:0.2px #222;">7</div>
<div class="t" style="left:715px;top:296px;font-size:8.9px;line-height:12px;transform:translate(0.90px,0.22px) scaleX(0.9666);color:#333;-webkit-text-stroke:0.2px #333;">Transmission</div>
<div class="t" style="left:715px;top:309px;font-size:8.9px;line-height:12px;transform:translate(0.90px,0.22px) scaleX(1.0700);color:#333;-webkit-text-stroke:0.2px #333;">Addition &amp;</div>
<div class="t" style="left:715px;top:322px;font-size:8.9px;line-height:12px;transform:translate(0.90px,0.22px) scaleX(1.0249);color:#333;-webkit-text-stroke:0.2px #333;">Subtraction Amount</div>
<div class="t" style="left:824px;top:310px;font-size:9.1px;line-height:12px;transform:translate(0.40px,0.85px) scaleX(0.9056);color:#222;-webkit-text-stroke:0.2px #222;">฿1,400.00</div>
<div class="t" style="left:702px;top:381px;font-size:11.2px;line-height:14px;transform:translate(0.80px,0.12px) scaleX(0.9134);color:#333;-webkit-text-stroke:0.2px #333;">ADDITION &amp; SUBSTRACTION BASED ON RUNNING KM</div>
<div class="t" style="left:715px;top:403px;font-size:8.9px;line-height:12px;transform:translate(0.90px,0.32px) scaleX(1.0230);color:#333;-webkit-text-stroke:0.2px #333;">Running KM Addition</div>
<div class="t" style="left:715px;top:416px;font-size:8.9px;line-height:12px;transform:translate(0.90px,0.32px) scaleX(1.0085);color:#333;-webkit-text-stroke:0.2px #333;">and Subtraction</div>
<div class="t" style="left:824px;top:412px;font-size:9.2px;line-height:12px;transform:translate(0.70px,0.51px) scaleX(1.0449);color:#333;letter-spacing:0.3px;-webkit-text-stroke:0.2px #333;">---</div>
<div class="t" style="left:715px;top:436px;font-size:8.9px;line-height:12px;transform:translate(0.90px,0.22px) scaleX(1.0230);color:#333;-webkit-text-stroke:0.2px #333;">Running KM Addition</div>
<div class="t" style="left:715px;top:449px;font-size:8.9px;line-height:12px;transform:translate(0.90px,0.22px) scaleX(1.0097);color:#333;-webkit-text-stroke:0.2px #333;">and Subtraction Point</div>
<div class="t" style="left:824px;top:445px;font-size:9.1px;line-height:12px;transform:translate(0.40px,0.35px) scaleX(0.9086);color:#222;-webkit-text-stroke:0.2px #222;">0</div>
<div class="t" style="left:715px;top:469px;font-size:8.9px;line-height:12px;transform:translate(0.90px,0.22px) scaleX(1.0230);color:#333;-webkit-text-stroke:0.2px #333;">Running KM Addition</div>
<div class="t" style="left:715px;top:482px;font-size:8.9px;line-height:12px;transform:translate(0.90px,0.22px) scaleX(1.0085);color:#333;-webkit-text-stroke:0.2px #333;">and Subtraction</div>
</div>
</body>
</html>
